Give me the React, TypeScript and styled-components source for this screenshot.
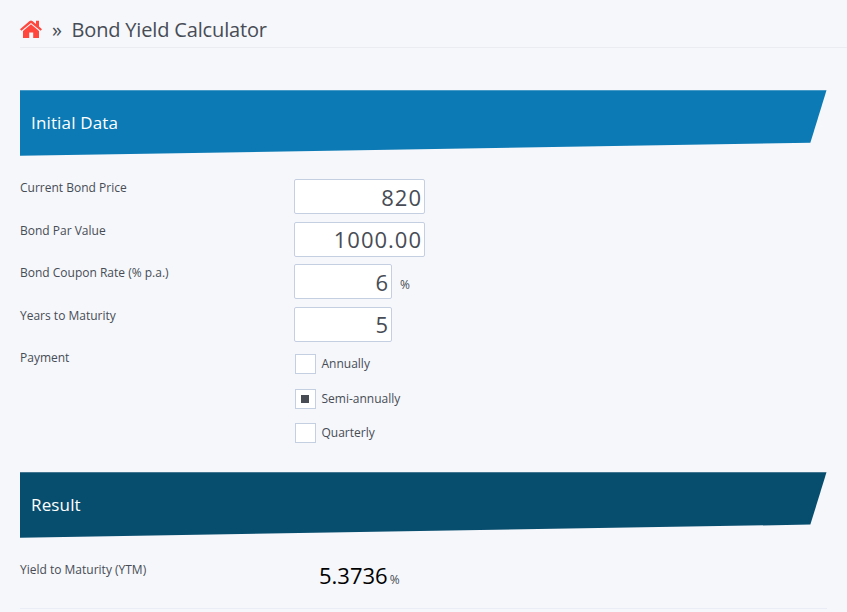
import React, { useState } from "react";
import styled, { createGlobalStyle } from "styled-components";

const GlobalStyle = createGlobalStyle`
  *, *::before, *::after { box-sizing: border-box; }
  html, body { margin: 0; background: #f5f7fb; overflow: hidden; }
  body { font-family: "Open Sans", "Noto Sans", sans-serif; color: #474c55; font-size: 12px; }
`;

const Page = styled.main`
  width: 847px;
  height: 612px;
  overflow: hidden;
  padding-left: 20px;
`;

const Header = styled.header`
  display: flex;
  height: 48px;
  padding-top: 13px;
  border-bottom: 1px solid #eaecf2;
  font-size: 20px;
  line-height: 34px;
`;

const HomeIcon = styled.svg`
  width: 22px;
  height: 18px;
  margin-top: 7px;
  fill: #ff473e;
`;

const Separator = styled.span`
  width: 20px;
  margin-left: 10px;
  font-size: 20px;
  line-height: 34px;
`;

const Title = styled.h1`
  margin: 0 0 0 -0.5px;
  font-size: 20px;
  font-weight: 400;
  letter-spacing: -0.16px;
  line-height: 34px;
`;

const Banner = styled.h2<{ $color: string; $top: number }>`
  display: flex;
  width: 806.5px;
  height: 65.5px;
  margin: ${(p) => p.$top}px 0 0;
  padding: 0 11px 1px;
  align-items: center;
  background: ${(p) => p.$color};
  color: #fff;
  clip-path: polygon(0 0, 100% 0, 98% 80%, 0 100%);
  font-size: 17px;
  font-weight: 400;
  letter-spacing: 0.15px;
`;

const Form = styled.form`
  display: grid;
  grid-template-columns: 274px 1fr;
  grid-template-rows: repeat(4, 42.5px) auto;
  margin-top: 23.5px;
`;

const Label = styled.label`
  line-height: 18px;
`;

const Field = styled.div`
  display: flex;
  align-items: flex-start;
`;

const Input = styled.input<{ $width: number }>`
  width: ${(p) => p.$width}px;
  height: 35px;
  padding: 0.4px 2px 0;
  border: 1px solid #c5cfe2;
  border-radius: 2px;
  outline: none;
  background: #fff;
  color: #474c55;
  font-family: inherit;
  font-size: 22px;
  letter-spacing: 1px;
  text-align: right;
`;

const Unit = styled.span<{ $gap: number }>`
  margin-left: ${(p) => p.$gap}px;
  font-size: 12px;
  line-height: 42px;
`;

const Options = styled.div`
  display: grid;
  grid-auto-rows: 34.5px;
  padding: 4.9px 0 0 1px;
  justify-items: start;
`;

const Option = styled.label`
  display: flex;
  height: 20px;
  gap: 5.5px;
  line-height: 20px;
`;

const Radio = styled.input`
  appearance: none;
  display: grid;
  width: 21px;
  height: 20px;
  margin: 0;
  place-items: center;
  border: 1px solid #c5cfe2;
  background: #fff;
  &:checked::before {
    content: "";
    width: 8px;
    height: 8px;
    margin-right: 1px;
    background: #474c55;
  }
`;

const Result = styled.div`
  display: grid;
  grid-template-columns: 299px 1fr;
  width: 806.5px;
  height: 71.5px;
  padding-top: 23.5px;
  border-bottom: 1px solid #eaecf6;
`;

const Value = styled.output`
  color: #000;
  font-size: 22px;
  line-height: 30px;
`;

const Reading = styled.div`
  display: flex;
  height: 38px;
  align-items: baseline;
  margin-top: -2px;
`;

const fields = [
  { label: "Current Bond Price", value: "820", width: 131, unit: "" },
  { label: "Bond Par Value", value: "1000.00", width: 131, unit: "" },
  { label: "Bond Coupon Rate (% p.a.)", value: "6", width: 98, unit: "%" },
  { label: "Years to Maturity", value: "5", width: 98, unit: "" },
];

export default function App() {
  const [payment, setPayment] = useState("Semi-annually");
  return (
    <>
      <GlobalStyle />
      <Page>
        <Header>
          <HomeIcon viewBox="0 0 22 18" aria-label="Home">
            <path d="M11 4.3 3 11V18h6.2v-5.4h4V18H19V11Z" />
            <path d="M22 9.2 19 6.6V.8h-3v3.1L12.4.9q-1.4-1-2.8 0L0 9.2l1.4 1.6L11 3l9.6 7.8Z" />
          </HomeIcon>
          <Separator>»</Separator>
          <Title>Bond Yield Calculator</Title>
        </Header>
        <Banner $color="#0c7ab4" $top={42.3}>Initial Data</Banner>
        <Form>
          {fields.map((f, i) => (
            <React.Fragment key={f.label}>
              <Label htmlFor={`field-${i}`}>{f.label}</Label>
              <Field>
                <Input id={`field-${i}`} $width={f.width} defaultValue={f.value} />
                {f.unit && <Unit $gap={8}>{f.unit}</Unit>}
              </Field>
            </React.Fragment>
          ))}
          <Label as="span">Payment</Label>
          <Options>
            {["Annually", "Semi-annually", "Quarterly"].map((o) => (
              <Option key={o}>
                <Radio
                  type="radio"
                  name="payment"
                  checked={payment === o}
                  onChange={() => setPayment(o)}
                />
                {o}
              </Option>
            ))}
          </Options>
        </Form>
        <Banner $color="#074d6e" $top={14.5}>Result</Banner>
        <Result>
          <Label as="span">Yield to Maturity (YTM)</Label>
          <Reading>
            <Value>5.3736</Value>
            <Unit $gap={2}>%</Unit>
          </Reading>
        </Result>
      </Page>
    </>
  );
}
